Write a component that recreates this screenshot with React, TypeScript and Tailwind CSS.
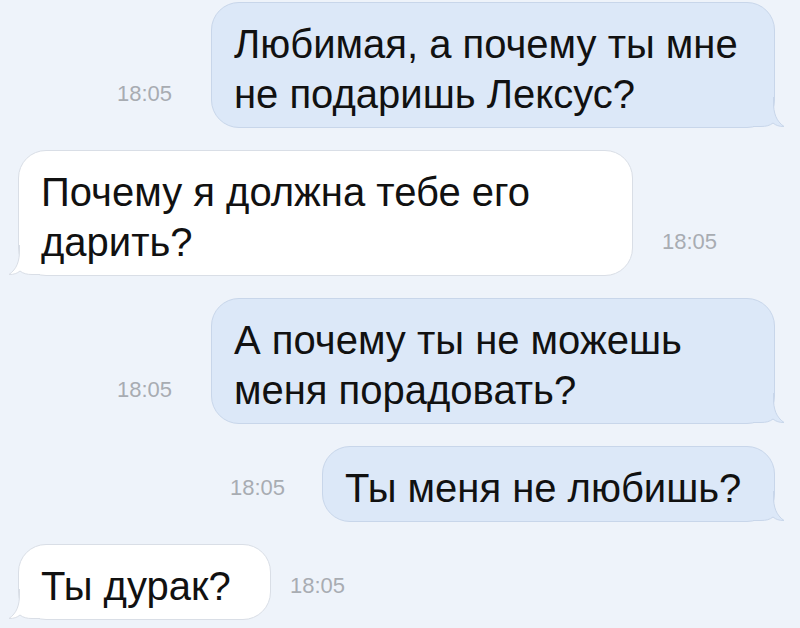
import React from "react";

type Msg = {
    out: boolean;
    lines: string[];
    width: string;
    gap: string;
};

const messages: Msg[] = [
    { out: true, lines: ["Любимая, а почему ты мне", "не подаришь Лексус?"], width: "w-[564px]", gap: "mr-[39px]" },
    { out: false, lines: ["Почему я должна тебе его", "дарить?"], width: "w-[615px]", gap: "ml-[29px]" },
    { out: true, lines: ["А почему ты не можешь", "меня порадовать?"], width: "w-[564px]", gap: "mr-[39px]" },
    { out: true, lines: ["Ты меня не любишь?"], width: "w-[453px]", gap: "mr-[37px]" },
    { out: false, lines: ["Ты дурак?"], width: "w-[253px]", gap: "ml-[19px]" },
];

function Tail({ out }: { out: boolean }) {
    const fill = out ? "#dce8f8" : "#ffffff";
    const stroke = out ? "#c8d6ea" : "#d9dee6";
    const shape = "M20.5 0 V5 C20.5 16, 23 24, 31 29.5 C26 29.5, 23 28.5, 20 26 C17 28.5, 13 29.5, 8 29.5 H0";
    return (
        <svg
            width="32"
            height="30"
            viewBox="0 0 32 30"
            className={
                out
                    ? "absolute bottom-0 right-[-11px]"
                    : "absolute bottom-0 left-[-11px] scale-x-[-1]"
            }
        >
            <path d={shape + " V0 Z"} fill={fill} />
            <path d={shape} fill="none" stroke={stroke} strokeWidth="1" />
        </svg>
    );
}

function Time({ gap }: { gap: string }) {
    return <span className={`block ${gap} mb-[23px] text-[22px] leading-none text-[#a8acb2]`}>18:05</span>;
}

function Bubble({ m }: { m: Msg }) {
    return (
        <div
            className={`relative ${m.width} rounded-[28px] border pl-[22px] pr-[20px] pt-[16px] pb-[8px] ${
                m.out ? "border-[#c8d6ea] bg-[#dce8f8]" : "border-[#d9dee6] bg-white"
            }`}
        >
            <Tail out={m.out} />
            <p className="relative text-[40px] leading-[50px] text-[#111]">
                {m.lines.map((l, i) => (
                    <span key={i} className="block whitespace-nowrap">
                        {l}
                    </span>
                ))}
            </p>
        </div>
    );
}

export default function App() {
    return (
        <div
            className="flex h-[628px] w-[800px] flex-col gap-[22px] overflow-hidden bg-[#eef3fa] pt-[2px]"
            style={{ fontFamily: '"Liberation Sans", Arial, sans-serif' }}
        >
            {messages.map((m, i) =>
                m.out ? (
                    <div key={i} className="flex items-end justify-end pr-[25px]">
                        <Time gap={m.gap} />
                        <Bubble m={m} />
                    </div>
                ) : (
                    <div key={i} className="flex items-end pl-[18px]">
                        <Bubble m={m} />
                        <Time gap={m.gap} />
                    </div>
                )
            )}
        </div>
    );
}
